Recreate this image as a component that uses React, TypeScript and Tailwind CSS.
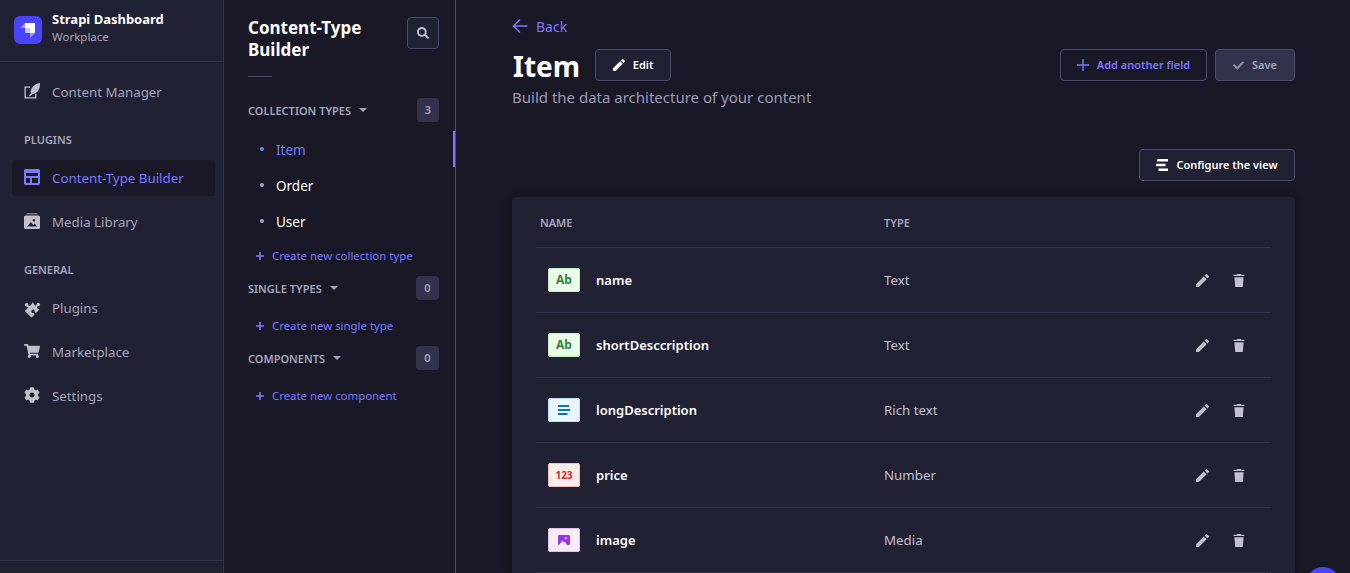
import React from "react";
import { FaPuzzlePiece, FaShoppingCart, FaCog, FaSearch, FaCheck } from "react-icons/fa";

function Pencil({ className }: { className?: string }) {
  return (
    <svg viewBox="0 0 24 24" className={className} fill="currentColor">
      <path d="M0 18.7V24h5.300L19.600 9.700l-5.300-5.300L0 18.700z" />
      <path d="M23.600 5.700a1.400 1.400 0 000-2L20.300.4a1.400 1.400 0 00-2 0l-2.400 2.400 5.300 5.300 2.400-2.400z" />
    </svg>
  );
}

function Trash({ className }: { className?: string }) {
  return (
    <svg viewBox="0 0 20 24" className={className} fill="currentColor">
      <path d="M7 0h6l1 1.500h6V3.500H0V1.500h6L7 0z" />
      <path d="M1.500 6h17l-1.500 18H3L1.500 6z" />
    </svg>
  );
}

function Logo() {
  return (
    <div className="flex h-[28px] w-[28px] items-center justify-center rounded-[6px] bg-[#4945ff]">
      <svg viewBox="0 0 16 16" className="h-[16px] w-[16px]">
        <path d="M5 1h10v10H10V6H5z" fill="#fff" />
        <path d="M5 1v5H0z" fill="#fff" fillOpacity="0.45" />
        <path d="M5 6h5v5H5z" fill="#fff" fillOpacity="0.7" />
        <path d="M10 11h5l-5 5z" fill="#fff" fillOpacity="0.45" />
      </svg>
    </div>
  );
}

function WriteIcon() {
  return (
    <svg viewBox="0 0 16 16" className="h-[16px] w-[16px]" fill="currentColor">
      <path d="M.5 3.500H6v1.200H1.800v9.500h9.400V10.500h1.300V15.500H.5z" />
      <path d="M16 0c.2 5-1.500 10.500-7.800 11.200l-2.400 2.300-.9-.9 2-2.100C5.800 5 10.500.8 16 0z" />
    </svg>
  );
}

function LayoutIcon() {
  return (
    <svg viewBox="0 0 16 16" className="h-[16px] w-[16px]" fill="currentColor">
      <path fillRule="evenodd" d="M1.500 0h13A1.500 1.500 0 0116 1.500v13a1.500 1.500 0 01-1.500 1.500h-13A1.500 1.500 0 010 14.500v-13A1.500 1.500 0 011.500 0zM2 4v3h12V4H2zm0 5v5h4V9H2zm6 0v5h6V9H8z" />
    </svg>
  );
}

function MediaIcon({ className }: { className?: string }) {
  return (
    <svg viewBox="0 0 16 16" className={className} fill="currentColor">
      <path d="M2.500 0h11v1.500h-11z" opacity="0.55" />
      <path fillRule="evenodd" d="M1.500 2.500h13A1.500 1.500 0 0116 4v10.500a1.500 1.500 0 01-1.500 1.500h-13A1.500 1.500 0 010 14.500V4a1.500 1.500 0 011.500-1.500zM10 6a1.300 1.300 0 100 2.600A1.300 1.300 0 0010 6zM3 13.500h10l-2.200-3-1.600 1.400L7 9l-4 4.500z" />
    </svg>
  );
}

function ConfigureIcon() {
  return (
    <svg viewBox="0 0 12 12" className="h-[12px] w-[12px]" fill="currentColor">
      <path d="M1 0h11v2.500H1zM0 4.700h9.500v2.500H0zM2.500 9.500H12V12H2.500z" />
    </svg>
  );
}

function Caret() {
  return <span className="ml-[8px] h-0 w-0 border-x-[4px] border-t-[4px] border-x-transparent border-t-[#a5a5ba]" />;
}

function NavItem({ icon, label, active }: { icon: React.ReactNode; label: string; active?: boolean }) {
  return (
    <div
      className={`ml-[12px] mr-[8px] flex h-[36px] items-center gap-[12px] rounded-[4px] pl-[12px] text-[13.3px] ${
        active ? "bg-[#181826] text-[#7b79ff]" : "text-[#a5a5ba]"
      }`}
    >
      <span className={`flex w-[16px] justify-center pb-[2px] ${active ? "text-[#7b79ff]" : "text-[#c0c0cf]"}`}>{icon}</span>
      <span className="pt-[1px]">{label}</span>
    </div>
  );
}

function GroupTitle({ label, count, badge }: { label: string; count: number; badge: string }) {
  return (
    <div className="flex h-[24px] items-center justify-between">
      <div className="flex items-center text-[11px] font-semibold uppercase text-[#a5a5ba]">
        <span className="pt-[2px]">{label}</span>
        <Caret />
      </div>
      <span className={`flex h-[24px] items-center justify-center rounded-[4px] bg-[#32324d] text-[11px] font-semibold text-[#a5a5ba] ${badge}`}>
        {count}
      </span>
    </div>
  );
}

function CreateLink({ label }: { label: string }) {
  return (
    <div className="flex h-[20px] items-center gap-[8px] pl-[8px] pt-[2px] text-[11.4px] text-[#7b79ff]">
      <svg viewBox="0 0 10 10" className="h-[8px] w-[8px]" fill="currentColor">
        <path d="M4 0h2v4h4v2H6v4H4V6H0V4h4z" />
      </svg>
      {label}
    </div>
  );
}

function SubItem({ label, active }: { label: string; active?: boolean }) {
  return (
    <div className="relative flex h-[36px] items-center pl-[12px] text-[13.5px]">
      <span className={`mr-[12px] h-[4px] w-[4px] rounded-full ${active ? "bg-[#7b79ff]" : "bg-[#a5a5ba]"}`} />
      <span className={`pt-[2px] ${active ? "text-[#7b79ff]" : "text-white"}`}>{label}</span>
      {active && <span className="absolute right-[-16px] top-0 h-[36px] w-[2px] bg-[#7b79ff]" />}
    </div>
  );
}

const rows = [
  { name: "name", type: "Text", kind: "text" },
  { name: "shortDesccription", type: "Text", kind: "text" },
  { name: "longDescription", type: "Rich text", kind: "rich" },
  { name: "price", type: "Number", kind: "number" },
  { name: "image", type: "Media", kind: "media" },
];

function FieldIcon({ kind }: { kind: string }) {
  if (kind === "text")
    return (
      <span className="flex h-[24px] w-[32px] items-center justify-center rounded-[2px] border border-[#c6f0c2] bg-[#eafbe7] text-[12px] font-bold text-[#328048]">
        Ab
      </span>
    );
  if (kind === "rich")
    return (
      <span className="flex h-[24px] w-[32px] items-center justify-center rounded-[2px] border border-[#b8e1ff] bg-[#eaf5ff] text-[#0c75af]">
        <svg viewBox="0 0 12 10" className="h-[10px] w-[12px]" fill="currentColor">
          <path d="M0 0h11v2H0zM0 4h12v2H0zM0 8h9.500v2H0z" />
        </svg>
      </span>
    );
  if (kind === "number")
    return (
      <span className="flex h-[24px] w-[32px] items-center justify-center rounded-[2px] border border-[#f5c0b8] bg-[#fcecea] text-[10px] font-bold text-[#d02b20]">
        123
      </span>
    );
  return (
    <span className="flex h-[24px] w-[32px] items-center justify-center rounded-[2px] border border-[#e0c1f4] bg-[#f6ecfc] text-[#9736e8]">
      <svg viewBox="0 0 12 10" className="h-[10px] w-[12px]" fill="currentColor">
        <path fillRule="evenodd" d="M1 0h10a1 1 0 011 1v8a1 1 0 01-1 1H9L7 6.800 6 7.800 4.500 5.500 1 10a1 1 0 01-1-1V1a1 1 0 011-1zm6.800 2.200a1 1 0 100 2 1 1 0 000-2z" />
      </svg>
    </span>
  );
}

export default function App() {
  return (
    <div className="relative flex h-[573px] w-[1350px] overflow-hidden bg-[#181826] text-white">
      <aside className="flex h-full w-[224px] shrink-0 flex-col border-r border-[#32324d] bg-[#212134] font-['Noto_Sans',sans-serif]">
        <div className="flex h-[62px] shrink-0 items-center gap-[10px] border-b border-[#32324d] pb-[2px] pl-[14px]">
          <Logo />
          <div className="mb-[3px]">
            <div className="text-[13px] leading-[17px] font-bold text-white">Strapi Dashboard</div>
            <div className="text-[11.5px] leading-[17px] text-[#a5a5ba]">Workplace</div>
          </div>
        </div>
        <div className="flex-1 pt-[12px]">
          <NavItem icon={<WriteIcon />} label="Content Manager" />
          <div className="mt-[22px] mb-[12px] pl-[24px] text-[11px] leading-[16px] font-semibold text-[#a5a5ba]">PLUGINS</div>
          <NavItem active icon={<LayoutIcon />} label="Content-Type Builder" />
          <div className="mt-[8px]">
            <NavItem icon={<MediaIcon className="h-[16px] w-[16px]" />} label="Media Library" />
          </div>
          <div className="mt-[22px] mb-[12px] pl-[24px] text-[11px] leading-[16px] font-semibold text-[#a5a5ba]">GENERAL</div>
          <div className="flex flex-col gap-[8px]">
            <NavItem icon={<FaPuzzlePiece size={16} className="rotate-[-45deg]" />} label="Plugins" />
            <NavItem icon={<FaShoppingCart size={16} />} label="Marketplace" />
            <NavItem icon={<FaCog size={16} />} label="Settings" />
          </div>
        </div>
        <div className="h-[13px] shrink-0 border-t border-[#32324d]" />
      </aside>

      <nav className="h-full w-[232px] shrink-0 border-r border-[#4a4a6a] pl-[24px] pr-[16px] font-['Noto_Sans',sans-serif]">
        <div className="flex items-start justify-between pt-[17px]">
          <h2 className="w-[130px] text-[17px] leading-[22px] font-bold text-white">Content-Type Builder</h2>
          <button className="flex h-[32px] w-[32px] items-center justify-center rounded-[4px] border border-[#4a4a6a] bg-[#212134] text-[#c0c0cf]">
            <FaSearch size={12} />
          </button>
        </div>
        <div className="mt-[15px] h-px w-[24px] bg-[#4a4a6a]" />
        <div className="mt-[21px]">
          <GroupTitle label="Collection Types" count={3} badge="w-[22px]" />
          <div className="mt-[9px]">
            <SubItem active label="Item" />
            <SubItem label="Order" />
            <SubItem label="User" />
          </div>
          <div className="mt-[6px]">
            <CreateLink label="Create new collection type" />
          </div>
        </div>
        <div className="mt-[11px]">
          <GroupTitle label="Single Types" count={0} badge="w-[23px]" />
          <div className="mt-[15px]">
            <CreateLink label="Create new single type" />
          </div>
        </div>
        <div className="mt-[11px]">
          <GroupTitle label="Components" count={0} badge="w-[23px]" />
          <div className="mt-[15px]">
            <CreateLink label="Create new component" />
          </div>
        </div>
      </nav>

      <main className="min-w-0 flex-1 pl-[56px] pr-[55px] font-['Noto_Sans',sans-serif]">
        <div className="flex h-[49px] items-start pt-[17px]">
          <div className="flex h-[18px] items-center gap-[8px] text-[14px] text-[#7b79ff]">
            <svg viewBox="0 0 16 16" className="h-[16px] w-[16px]" fill="none" stroke="currentColor" strokeWidth="1.600">
              <path d="M15.500 8H1.500M8 1.500L1.500 8 8 14.500" />
            </svg>
            Back
          </div>
        </div>
        <div className="flex h-[32px] items-center justify-between">
          <div className="flex items-center gap-[15px]">
            <h1 className="pt-[2px] pl-[1px] text-[28px] leading-[34px] font-bold text-white">Item</h1>
            <button className="flex h-[32px] w-[76px] items-center justify-center gap-[8px] rounded-[4px] border border-[#4a4a6a] bg-[#212134] text-[11px] font-semibold text-white">
              <Pencil className="h-[12px] w-[12px]" />
              Edit
            </button>
          </div>
          <div className="flex gap-[8px]">
            <button className="flex h-[32px] w-[147px] items-center justify-center gap-[8px] rounded-[4px] border border-[#4a4a6a] bg-[#181826] text-[11px] font-semibold text-[#7b79ff]">
              <svg viewBox="0 0 12 12" className="h-[12px] w-[12px]" fill="currentColor">
                <path d="M5.300 0h1.400v5.300H12v1.400H6.700V12H5.300V6.700H0V5.300h5.300z" />
              </svg>
              Add another field
            </button>
            <button className="flex h-[32px] w-[80px] items-center justify-center gap-[8px] rounded-[4px] border border-[#4a4a6a] bg-[#32324d] text-[11px] font-semibold text-[#a5a5ba]">
              <FaCheck size={11} className="text-[#8e8ea9]" />
              Save
            </button>
          </div>
        </div>
        <p className="mt-[5px] text-[15px] leading-[22px] text-[#9a9ab0]">Build the data architecture of your content</p>
        <div className="mt-[41px] flex justify-end">
          <button className="flex h-[32px] w-[156px] items-center justify-center gap-[8px] rounded-[4px] border border-[#4a4a6a] bg-[#212134] text-[11px] font-semibold text-white">
            <ConfigureIcon />
            Configure the view
          </button>
        </div>
        <section className="mt-[16px] rounded-t-[4px] bg-[#212134] px-[24px] shadow-[0_1px_8px_rgba(3,3,5,0.35)]">
          <div className="flex h-[51px] items-center border-b border-[#32324d] pt-[2px] text-[11px] font-semibold text-[#a5a5ba]">
            <span className="w-[348px] pl-[4px]">NAME</span>
            <span>TYPE</span>
          </div>
          {rows.map((row) => (
            <div key={row.name} className="flex h-[65px] items-center border-b border-[#32324d]">
              <div className="flex w-[348px] items-center gap-[16px] pl-[12px]">
                <FieldIcon kind={row.kind} />
                <span className="pt-[1px] text-[13px] font-semibold text-white">{row.name}</span>
              </div>
              <span className="flex-1 pt-[1px] text-[13.3px] text-[#c0c0cf]">{row.type}</span>
              <div className="flex items-center gap-[24px] pr-[26px] text-[#c0c0cf]">
                <Pencil className="h-[13px] w-[13px]" />
                <Trash className="h-[13px] w-[12px]" />
              </div>
            </div>
          ))}
        </section>
      </main>

      <div className="absolute left-[1306px] top-[567px] h-[34px] w-[34px] rounded-full bg-[#4945ff]" />
    </div>
  );
}
